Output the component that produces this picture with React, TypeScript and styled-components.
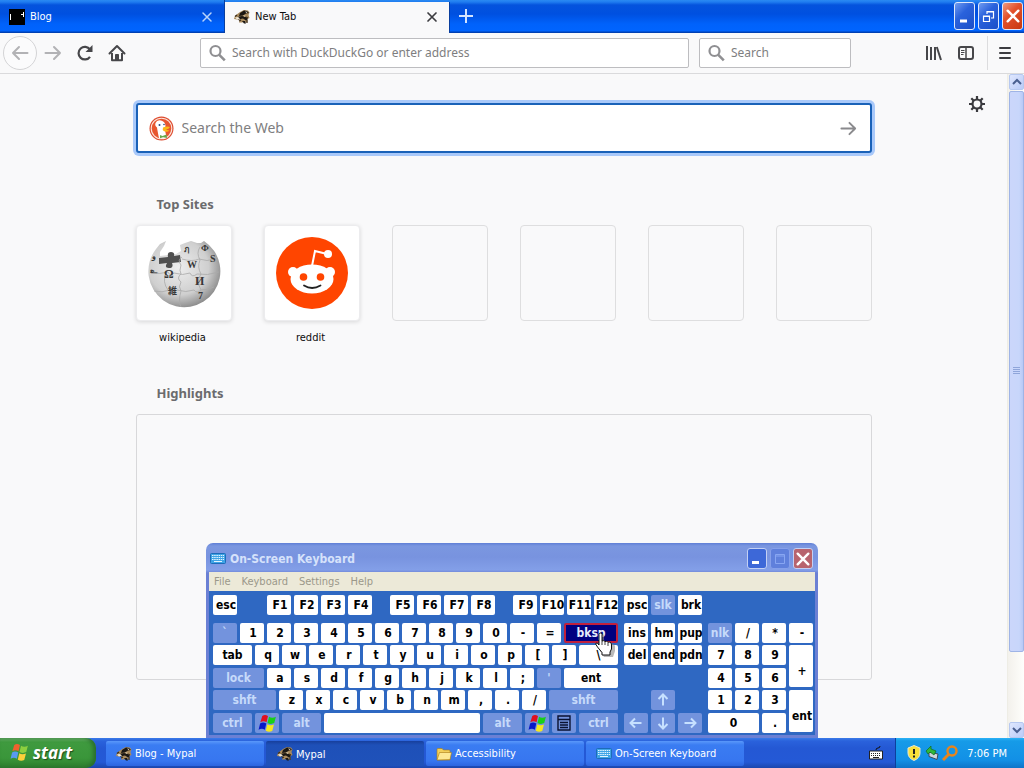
import React from "react";
import styled, { createGlobalStyle, css } from "styled-components";

const ui = `"DejaVu Sans Condensed", "DejaVu Sans", "Noto Sans CJK JP", sans-serif`;
const humanist = `"Noto Sans", "Open Sans", sans-serif`;

const GlobalStyle = createGlobalStyle`
  * { box-sizing: border-box; }
  body { margin: 0; font-family: ${ui}; font-size: 11px; color: #0c0c0d; }
  button, input { font: inherit; color: inherit; }
  button { padding: 0; border: 0; background: none; }
  svg { display: block; flex: none; }
  h2 { margin: 0; }
`;

const Screen = styled.div`
  min-height: 100vh;
  display: flex;
  flex-direction: column;
  background: #f9f9fa;
  overflow: hidden;
`;

/* ---------- tab strip ---------- */

const TabStrip = styled.header`
  display: flex;
  height: 33px;
  background: linear-gradient(#2a8af2 0, #1f7cf0 2px, #0453dd 5px, #0050e0 14px, #0062fb 24px, #0064ff 31px, #0040b4 32px);
`;

const Tab = styled.div<{ $active?: boolean }>`
  flex: 0 1 225px;
  display: flex;
  align-items: center;
  padding: 0 11px 0 9px;
  gap: 5px;
  color: #fff;
  border-right: 1px solid #0a3f9f;
  ${(p) =>
    p.$active &&
    css`
      margin-top: 2px;
      padding-bottom: 2px;
      background: #f9f9fa;
      color: #0c0c0d;
    `}
`;

const TabTitle = styled.span`
  flex: 1;
  line-height: 16px;
`;

const TabClose = styled.button`
  width: 12px;
  height: 12px;
`;

const NewTab = styled.button`
  width: 32px;
  display: flex;
  align-items: center;
  justify-content: center;
  padding-bottom: 2px;
`;

const WindowButtons = styled.div`
  margin-left: auto;
  display: flex;
  gap: 3px;
  padding: 2px 1px 3px 0;
`;

const WindowButton = styled.button<{ $close?: boolean }>`
  width: 21px;
  height: 28px;
  display: flex;
  align-items: center;
  justify-content: center;
  border: 1px solid #dfe9fb;
  border-radius: 3px;
  background: ${(p) =>
    p.$close
      ? "linear-gradient(135deg, #ee9a80, #e2512b 40%, #c8380f)"
      : "linear-gradient(135deg, #6f9bf0, #2a62dc 40%, #1b4fc8)"};
`;

/* ---------- navigation bar ---------- */

const NavBar = styled.nav`
  display: flex;
  align-items: center;
  height: 41px;
  padding: 0 3px;
  border-bottom: 1px solid #dadadc;
  background: #f9f9fa;
`;

const NavButton = styled.button<{ $round?: boolean }>`
  flex: none;
  width: 32px;
  height: 32px;
  display: flex;
  align-items: center;
  justify-content: center;
  ${(p) =>
    p.$round &&
    css`
      width: 34px;
      height: 34px;
      border: 1px solid #d4d4d6;
      border-radius: 50%;
      background: #fbfbfc;
    `}
`;

const Spring = styled.div`
  flex: 1 1 67px;
`;

const Field = styled.label<{ $basis: number }>`
  flex: 1 1 ${(p) => p.$basis}px;
  min-width: 0;
  display: flex;
  align-items: center;
  gap: 6px;
  height: 30px;
  padding: 0 8px;
  border: 1px solid #bdbdc0;
  border-radius: 2px;
  background: #fff;
  & + & { margin-left: 10px; }
`;

const FieldInput = styled.input<{ $large?: boolean }>`
  flex: 1;
  min-width: 0;
  width: 100%;
  padding: 0;
  border: 0;
  outline: 0;
  background: transparent;
  font-family: ${humanist};
  font-size: ${(p) => (p.$large ? 14 : 12)}px;
  line-height: 20px;
  &::placeholder { color: #7e7e80; opacity: 1; }
`;

const Divider = styled.div`
  width: 1px;
  height: 34px;
  margin: 0 1px 0 5px;
  background: #dcdcde;
`;

/* ---------- new tab page ---------- */

const Viewport = styled.main`
  position: relative;
  flex: 1;
  display: flex;
`;

const NewTabPage = styled.div`
  position: relative;
  flex: 1;
  padding: 29px 16px 58px;
`;

const Settings = styled.button`
  position: absolute;
  top: 21px;
  right: 21px;
  width: 18px;
  height: 18px;
`;

const Column = styled.div`
  max-width: 736px;
  margin: 0 auto;
`;

const SearchBox = styled.form`
  display: flex;
  align-items: center;
  gap: 8px;
  height: 50px;
  padding: 0 12px 0 11px;
  border: 2px solid #1a62b8;
  border-radius: 3px;
  background: #fff;
  box-shadow: 0 0 0 3px #a9c9fa;
`;

const SectionTitle = styled.h2`
  padding-left: 21px;
  margin: 43px 0 13px;
  font: bold 13px/16px ${humanist};
  color: #6b6b6d;
`;

const Sites = styled.ul`
  display: grid;
  grid-template-columns: repeat(6, 96px);
  justify-content: space-between;
  margin: 0;
  padding: 0;
  list-style: none;
`;

const SiteLink = styled.a`
  display: block;
  color: inherit;
  text-decoration: none;
`;

const Tile = styled.div<{ $filled?: boolean }>`
  height: 96px;
  display: flex;
  align-items: center;
  justify-content: center;
  border: 1px solid ${(p) => (p.$filled ? "#ececee" : "#dededf")};
  border-radius: 4px;
  background: ${(p) => (p.$filled ? "#fff" : "transparent")};
  box-shadow: ${(p) => (p.$filled ? "0 1px 4px rgba(12, 12, 13, 0.14)" : "none")};
`;

const SiteName = styled.div`
  height: 16px;
  margin-top: 9px;
  padding-right: 2px;
  line-height: 16px;
  text-align: center;
`;

const Highlights = styled.section`
  ${SectionTitle} { margin-top: 39px; }
`;

const HighlightsBox = styled.div`
  height: 266px;
  border: 1px solid #d8d8da;
  border-radius: 3px;
`;

/* ---------- scrollbar ---------- */

const ScrollBar = styled.div`
  flex: none;
  width: 17px;
  display: flex;
  flex-direction: column;
  padding-left: 1px;
  border-left: 1px solid #eeede5;
  background: linear-gradient(90deg, #f3f1ec, #fefefb);
`;

const ScrollArrow = styled.button`
  height: 16px;
  display: flex;
  align-items: center;
  justify-content: center;
  border: 1px solid #b6c8f0;
  border-radius: 2px;
  background: linear-gradient(135deg, #dfe7fe, #bacbf8);
`;

const ScrollTrack = styled.div`
  flex: 1;
  padding: 1px 0;
`;

const ScrollThumb = styled.div`
  height: 89%;
  display: flex;
  align-items: center;
  justify-content: center;
  border: 1px solid #9fb4e6;
  border-radius: 2px;
  background: linear-gradient(90deg, #cbd6fb, #c8d6fb 70%, #b8c9f6);
`;

/* ---------- on-screen keyboard ---------- */

const KeyboardWindow = styled.section`
  position: absolute;
  left: 50%;
  bottom: 0;
  transform: translateX(-50%);
  width: 612px;
  padding: 0 3px 3px;
  border-radius: 7px 7px 0 0;
  background: linear-gradient(#5f7fd6 0, #7b97e0 3px, #7893df 14px, #839fe8 27px, #6b80d4 30px);
`;

const TitleBar = styled.div`
  display: flex;
  align-items: center;
  height: 29px;
  gap: 4px;
  padding: 2px 2px 0 1px;
`;

const Title = styled.h2`
  flex: 1;
  font: bold 12px/18px ${ui};
  color: #d6e2fb;
`;

const TitleButton = styled.button<{ $kind: "min" | "max" | "close" }>`
  width: 20px;
  height: 21px;
  margin-left: -1px;
  display: flex;
  align-items: center;
  justify-content: center;
  border: 1px solid ${(p) => (p.$kind === "max" ? "#86a0ea" : "#c3d0f4")};
  border-radius: 3px;
  background: ${(p) => ({ min: "#3d68d8", max: "#5f80dc", close: "#b8646e" })[p.$kind]};
`;

const MenuBar = styled.div`
  display: flex;
  gap: 11px;
  height: 19px;
  padding: 0 5px;
  background: #ece9d8;
`;

const MenuItem = styled.button`
  line-height: 18px;
  color: #9b988a;
`;

const Keys = styled.div`
  display: flex;
  gap: 6px;
  padding: 4px 2px 2px 4px;
  background: #2f68c2;
`;

const KeyRows = styled.div`
  display: grid;
  grid-template-rows: 28px 22px 23px 22px 23px 20px;
`;

const KeyRow = styled.div`
  display: flex;
  gap: 3px;
`;

const PadGrid = styled(KeyRows)<{ $cols: number }>`
  grid-template-columns: repeat(${(p) => p.$cols}, 24px);
  column-gap: 3px;
`;

const Key = styled.button<{ $w?: number; $dim?: boolean; $tall?: boolean; $hot?: boolean; $at?: string }>`
  flex: none;
  position: relative;
  width: ${(p) => p.$w ?? 24}px;
  height: ${(p) => (p.$tall ? 42 : 20)}px;
  grid-area: ${(p) => p.$at ?? "auto"};
  display: flex;
  align-items: center;
  justify-content: center;
  padding-top: ${(p) => (p.$tall ? 10 : 0)}px;
  padding-left: ${(p) => (p.$w || p.$dim ? 0 : 2)}px;
  border-radius: 2px;
  font-size: 12px;
  font-weight: bold;
  line-height: 22px;
  background: ${(p) => (p.$dim ? "#7393dd" : "#fff")};
  color: ${(p) => (p.$dim ? "#c6dafa" : "#000")};
  ${(p) =>
    p.$hot &&
    css`
      border: 2px solid #c0203c;
      background: #000080;
      color: #e6ecfc;
    `}
`;

const KeyGap = styled.div<{ $w: number }>`
  width: ${(p) => p.$w}px;
`;

const Pointer = styled.svg`
  position: absolute;
  left: 29px;
  top: 7px;
  z-index: 2;
`;

/* ---------- task bar ---------- */

const TaskBar = styled.footer`
  display: flex;
  height: 30px;
  background: linear-gradient(#3a7be8 0, #2a62dc 3px, #2458d4 10px, #2459d6 24px, #1b46ac 30px);
`;

const StartButton = styled.button`
  display: flex;
  align-items: center;
  gap: 4px;
  width: 96px;
  margin-right: 10px;
  padding: 0 0 1px 10px;
  border-radius: 0 10px 10px 0;
  background: linear-gradient(#6fb76f 0, #3f9a3f 4px, #3a963a 20px, #2c7c2c 30px);
  box-shadow: inset -3px 0 4px #2a6e2e;
  font: italic bold 17px/20px "Open Sans", sans-serif;
  color: #fff;
  text-shadow: 1px 1px 1px #1d4d1d;
`;

const Tasks = styled.div`
  flex: 1;
  display: flex;
  gap: 2px;
  padding: 3px 0 2px;
`;

const Task = styled.button<{ $active?: boolean }>`
  flex: 0 1 158px;
  display: flex;
  align-items: center;
  gap: 3px;
  padding: ${(p) => (p.$active ? "1px 10px 0 11px" : "0 10px")};
  border-radius: 2px;
  color: #fff;
  background: ${(p) =>
    p.$active ? "linear-gradient(#173f9c, #1e50b8 4px, #1f52ba)" : "linear-gradient(#5a98fa, #3a7cf2 4px, #3776f0 20px, #2c65e0)"};
`;

const LanguageBar = styled.button`
  width: 38px;
  display: flex;
  align-items: center;
  justify-content: center;
`;

const Tray = styled.div`
  display: flex;
  align-items: center;
  gap: 2px;
  padding: 0 17px 0 10px;
  border-left: 1px solid #0d3f9c;
  background: linear-gradient(#2bb2f6 0, #169be8 3px, #1290e6 22px, #0e74c8 30px);
  color: #fff;
`;

const Clock = styled.time`
  margin-left: 7px;
`;

/* ---------- drawings ---------- */

const Cross = ({ size, color, width = 1.5 }: { size: number; color: string; width?: number }) => (
  <svg width={size} height={size} viewBox="0 0 12 12" stroke={color} strokeWidth={width} strokeLinecap="round">
    <path d="M2 2 10 10M10 2 2 10" />
  </svg>
);

const Arrow = ({ color, flip, size = 20 }: { color: string; flip?: boolean; size?: number }) => (
  <svg width={size} height={size} viewBox="0 0 20 20" fill="none" stroke={color} strokeWidth="2" strokeLinecap="round" strokeLinejoin="round">
    <path d={flip ? "M17.5 10H3M9 4 3 10l6 6" : "M2.5 10H17M11 4l6 6-6 6"} />
  </svg>
);

const Magnifier = () => (
  <svg width="17" height="18" viewBox="0 0 17 18" fill="none" stroke="#8f8f92">
    <circle cx="6.5" cy="7" r="5" strokeWidth="2.2" />
    <path d="M10.3 10.8 15.8 16.3" strokeWidth="2.6" />
  </svg>
);

const Raccoon = () => (
  <svg width="16" height="16" viewBox="0 0 16 16">
    <path d="M2 6 6 3l4-2 4 .5 1.500 2-1 2.500 1 3-2 1v3.500h-2l-1-2-2 2H5l1-3H3L0 10l1-3z" fill="#a98a5c" />
    <path d="M6 4l4-2.500 3 .5 2 2-3 .5-3 2-4 .5zM3 8l5-1 4 1 2 2-2 1.500-3-2-5 1zM8 12h3l1 2.500h-2z" fill="#1b1713" />
    <path d="M1 8.500 4 8l2 1.500-3 1zM11 2.500l2.500.5-1 1zM9 6.500l2.500.3-1 1z" fill="#f4ead6" />
    <path d="M1 7.500 3 6M12 8l2 1M5 12l2-1M13 11v3" stroke="#3b2d1c" strokeWidth="1.200" />
  </svg>
);

const WinFlag = ({ size, soft }: { size: number; soft?: boolean }) => (
  <svg width={size} height={size} viewBox="0 0 20 20">
    <path d="M4.500 2.200Q7-.2 10.500 2L9 8.600Q5.600 6.600 2.500 8.600z" fill={soft ? "#f0612e" : "#e01020"} />
    <path d="M11.600 3Q15 5 18.800 3l-1.700 6.600Q13.500 11.400 10 9.400z" fill={soft ? "#8ccf3f" : "#18d018"} />
    <path d="M2.200 9.900Q5.400 8 8.700 10L7.200 16.500Q4 14.500.6 16.500z" fill={soft ? "#5a9af0" : "#0818c8"} />
    <path d="M9.800 10.900Q13 12.700 16.800 11L15 17.800Q11.500 19.600 8.200 17.500z" fill={soft ? "#fcd03a" : "#f4e820"} />
  </svg>
);

const KeyboardIcon = () => (
  <svg width="16" height="16" viewBox="0 0 16 16">
    <rect x="0.500" y="2.500" width="15" height="10" rx="1" fill="#3fa4e6" stroke="#1d6cb8" />
    <path d="M2 4.500h12M2 6.500h12M2 8.500h12" stroke="#e2f4ff" strokeDasharray="1.500 .7" />
    <path d="M4 10.500h8" stroke="#e2f4ff" />
  </svg>
);

const Folder = () => (
  <svg width="16" height="16" viewBox="0 0 16 16" stroke="#a87a12" strokeWidth=".6">
    <path d="M1 3.500Q1 2.500 2 2.500h4l1.500 1.500H13q1 0 1 1V14H1z" fill="#f2cf5a" />
    <path d="M1 14 3.500 6.500h12L14 13.500z" fill="#fde894" />
  </svg>
);

const DuckLogo = () => (
  <svg width="25" height="25" viewBox="0 0 25 25">
    <circle cx="12.500" cy="12.500" r="12" fill="#dd4b2e" />
    <circle cx="12.500" cy="12.500" r="10.300" fill="#e8562f" stroke="#fbe4dc" strokeWidth="1.100" />
    <path d="M6.500 7Q8 3.500 12 4.500q4 1 4.500 5L16 14l1.500 7.500q-4 2-7.500.8Q8.500 15 8 11.500 5.500 9.500 6.500 7z" fill="#fff" />
    <path d="M14 11.500q4-1.500 7-.5-1 2-4 2.500 2 1 3.500 1-2 2-5.500.8-2-1.300-1-3.800z" fill="#fbb917" />
    <path d="M11 19l2.500 1 4-1.500.5 3.500-4-.8-3 1z" fill="#67a94a" />
    <circle cx="10.500" cy="9" r="1" fill="#2b4a7d" />
    <circle cx="15" cy="8.500" r=".8" fill="#2b4a7d" />
  </svg>
);

const Gear = () => (
  <svg width="18" height="18" viewBox="0 0 18 18" fill="none" stroke="#3a3a3e">
    <circle cx="9" cy="9" r="4.500" strokeWidth="2.200" />
    <path
      d="M9 1v3M9 14v3M1 9h3M14 9h3M3.300 3.300l2.200 2.200M12.500 12.500l2.200 2.200M3.300 14.700l2.200-2.200M12.500 5.500l2.200-2.200"
      strokeWidth="2.200"
    />
  </svg>
);

const WikipediaGlobe = () => (
  <svg width="76" height="76" viewBox="0 0 76 76">
    <defs>
      <radialGradient id="globe" cx=".42" cy=".4" r=".64">
        <stop offset="0" stopColor="#ededed" />
        <stop offset=".65" stopColor="#cfcfcf" />
        <stop offset="1" stopColor="#858585" />
      </radialGradient>
    </defs>
    <path
      d="M20 6l-2 5-4 6 0 4 16-2 5-3-1-6 5-2 6-2 6 2 4 0 3-2A36 36 0 1 1 10 14l4-5z"
      fill="url(#globe)"
    />
    <path d="M13 23l9-1q-1-5 3-5t3 4l6-1 1 7-9 1q2 5-3 5t-2-5l-8 1z" fill="#505050" />
    <g fill="none" stroke="#a9a9a9" strokeWidth=".8">
      <path d="M4 37q10 3 18 0 2 5 6 1 9 3 16 0 2 5 7 1 10 2 22-2" />
      <path d="M8 56q8 2 16-1 3 5 7 0 9 3 17 0 3 4 7 0 6 0 13-3" />
      <path d="M20 38q-4 9 2 17M36 22q-5 3-1 8-2 6 0 9-5 4 0 8-3 5 0 9-3 10 0 16M54 12q-4 6 0 13-3 7 1 14-5 7 0 16" />
      <path d="M36 24q10 3 17 0 8 3 16 0" />
    </g>
    <g fill="#383838" fontFamily="Liberation Serif, Noto Sans CJK JP, serif" fontWeight="bold">
      <text x="18" y="43" fontSize="12">Ω</text>
      <text x="41" y="33" fontSize="10">W</text>
      <text x="49" y="50" fontSize="12">И</text>
      <text x="22" y="59" fontSize="9">維</text>
      <text x="52" y="64" fontSize="10">7</text>
      <text x="38" y="17" fontSize="8">ฦ</text>
      <text x="55" y="16" fontSize="9">Ф</text>
      <text x="64" y="27" fontSize="10">S</text>
      <text x="4" y="38" fontSize="8">உ</text>
      <text x="6" y="24" fontSize="8">و</text>
    </g>
  </svg>
);

const RedditLogo = () => (
  <svg width="72" height="72" viewBox="0 0 72 72">
    <circle cx="36" cy="36" r="36" fill="#ff4500" />
    <path d="M36 29 39 14l12 3" fill="none" stroke="#fff" strokeWidth="2" />
    <circle cx="52" cy="17" r="4" fill="#fff" />
    <circle cx="17" cy="35" r="5" fill="#fff" />
    <circle cx="54" cy="35" r="5" fill="#fff" />
    <ellipse cx="36" cy="42" rx="21.500" ry="14.500" fill="#fff" />
    <circle cx="27.500" cy="40" r="3.800" fill="#ff4500" />
    <circle cx="44.500" cy="40" r="3.800" fill="#ff4500" />
    <path d="M28 48.500q8 5 16.500 0" fill="none" stroke="#222" strokeWidth="1.800" strokeLinecap="round" />
  </svg>
);

const Chevron = ({ down }: { down?: boolean }) => (
  <svg width="10" height="8" viewBox="0 0 10 8" fill="none" stroke="#4a5f90" strokeWidth="2">
    <path d={down ? "M1 2l4 4 4-4" : "M1 6l4-4 4 4"} />
  </svg>
);

const KeyArrow = ({ turn }: { turn: number }) => (
  <svg width="14" height="14" viewBox="0 0 14 14" fill="none" stroke="#c6e0ff" strokeWidth="2">
    <path d="M1.500 7h11M8 2.500l4.500 4.500L8 11.500" transform={`rotate(${turn} 7 7)`} />
  </svg>
);

const MenuKeyIcon = () => (
  <svg width="14" height="16" viewBox="0 0 14 16" fill="none" stroke="#0a1230" strokeWidth="1.400">
    <path d="M1 1h12v14H1zM1 4.500h12M3 7.500h8M3 10h8M3 12.500h8" />
  </svg>
);

const HandPointer = () => (
  <Pointer width="20" height="26" viewBox="0 0 20 26" aria-hidden="true">
    <path d="M6 3.500Q6 2 7.500 2T9 3.500V10l9 2q2 .5 2 2.500V19l-2 6H9l-5-8-1-3 2-.5 2 2z" fill="#8a8a8a" opacity=".6" />
    <path
      d="M4 2.500Q4 1 5.500 1T7 2.500V9q2-1 3 .5 2-.8 3 .8 2-.6 3 .7.500.5.500 2V17l-1.500 3v3H7v-2.500L2.500 15 .6 12q0-1.500 1.900-.7L4 13z"
      fill="#fff"
      stroke="#111"
      strokeWidth="1"
    />
    <path d="M7 9v4M10 10v3M13 11v3" stroke="#111" strokeWidth=".8" />
  </Pointer>
);

/* ---------- keyboard data ---------- */

type KeySpec = { label?: string; w?: number; dim?: boolean; hot?: boolean; gap?: boolean; icon?: "win" | "menu"; name?: string };

const plain = (labels: string): KeySpec[] => labels.split(" ").map((label) => ({ label }));

const mainRows: KeySpec[][] = [
  [
    { label: "esc" }, { gap: true, w: 24 }, ...plain("F1 F2 F3 F4"), { gap: true, w: 12 },
    ...plain("F5 F6 F7 F8"), { gap: true, w: 12 }, ...plain("F9 F10 F11 F12"),
  ],
  [{ label: "`", dim: true }, ...plain("1 2 3 4 5 6 7 8 9 0 - ="), { label: "bksp", w: 54, hot: true }],
  [{ label: "tab", w: 39 }, ...plain("q w e r t y u i o p [ ]"), { label: "\\", w: 39 }],
  [{ label: "lock", w: 51, dim: true }, ...plain("a s d f g h j k l ;"), { label: "'", dim: true }, { label: "ent", w: 54 }],
  [{ label: "shft", w: 63, dim: true }, ...plain("z x c v b n m , . /"), { label: "shft", w: 69, dim: true }],
  [
    { label: "ctrl", w: 39, dim: true }, { icon: "win", dim: true, name: "Windows" }, { label: "alt", w: 39, dim: true },
    { w: 156, name: "Space" }, { label: "alt", w: 39, dim: true }, { icon: "win", dim: true, name: "Windows" },
    { icon: "menu", dim: true, name: "Menu" }, { label: "ctrl", w: 39, dim: true },
  ],
];

type PadKey = { label?: string; at: string; dim?: boolean; w?: number; tall?: boolean; turn?: number; name?: string };

const editPad: PadKey[] = [
  { label: "psc", at: "1 / 1" }, { label: "slk", at: "1 / 2", dim: true }, { label: "brk", at: "1 / 3" },
  { label: "ins", at: "2 / 1" }, { label: "hm", at: "2 / 2" }, { label: "pup", at: "2 / 3" },
  { label: "del", at: "3 / 1" }, { label: "end", at: "3 / 2" }, { label: "pdn", at: "3 / 3" },
  { at: "5 / 2", dim: true, turn: -90, name: "Up" }, { at: "6 / 1", dim: true, turn: 180, name: "Left" },
  { at: "6 / 2", dim: true, turn: 90, name: "Down" }, { at: "6 / 3", dim: true, turn: 0, name: "Right" },
];

const numberPad: PadKey[] = [
  { label: "nlk", at: "2 / 1", dim: true }, { label: "/", at: "2 / 2" }, { label: "*", at: "2 / 3" }, { label: "-", at: "2 / 4" },
  { label: "7", at: "3 / 1" }, { label: "8", at: "3 / 2" }, { label: "9", at: "3 / 3" },
  { label: "+", at: "3 / 4 / span 2", tall: true },
  { label: "4", at: "4 / 1" }, { label: "5", at: "4 / 2" }, { label: "6", at: "4 / 3" },
  { label: "1", at: "5 / 1" }, { label: "2", at: "5 / 2" }, { label: "3", at: "5 / 3" },
  { label: "ent", at: "5 / 4 / span 2", tall: true },
  { label: "0", at: "6 / 1 / auto / span 2", w: 51 }, { label: ".", at: "6 / 3" },
];

const Pad = ({ keys, cols }: { keys: PadKey[]; cols: number }) => (
  <PadGrid $cols={cols}>
    {keys.map((k) => (
      <Key key={k.at} $at={k.at} $dim={k.dim} $w={k.w} $tall={k.tall} aria-label={k.name}>
        {k.turn === undefined ? k.label : <KeyArrow turn={k.turn} />}
      </Key>
    ))}
  </PadGrid>
);

const OnScreenKeyboard = () => (
  <KeyboardWindow aria-label="On-Screen Keyboard">
    <TitleBar>
      <KeyboardIcon />
      <Title>On-Screen Keyboard</Title>
      <TitleButton $kind="min" aria-label="Minimize">
        <svg width="12" height="12" viewBox="0 0 12 12"><path d="M1 9.500h7" stroke="#fff" strokeWidth="3" /></svg>
      </TitleButton>
      <TitleButton $kind="max" aria-label="Maximize">
        <svg width="12" height="12" viewBox="0 0 12 12" fill="none" stroke="#88a6f2"><path d="M1.500 1.500h9v9h-9zM1.500 3h9" /></svg>
      </TitleButton>
      <TitleButton $kind="close" aria-label="Close">
        <Cross size={16} color="#fff" width={1.800} />
      </TitleButton>
    </TitleBar>
    <MenuBar>
      {["File", "Keyboard", "Settings", "Help"].map((m) => (
        <MenuItem key={m}>{m}</MenuItem>
      ))}
    </MenuBar>
    <Keys>
      <KeyRows>
        {mainRows.map((row, r) => (
          <KeyRow key={r}>
            {row.map((k, i) =>
              k.gap ? (
                <KeyGap key={i} $w={k.w ?? 12} />
              ) : (
                <Key key={i} $w={k.w} $dim={k.dim} $hot={k.hot} aria-label={k.name}>
                  {k.label}
                  {k.icon === "win" && <WinFlag size={19} />}
                  {k.icon === "menu" && <MenuKeyIcon />}
                  {k.hot && <HandPointer />}
                </Key>
              )
            )}
          </KeyRow>
        ))}
      </KeyRows>
      <Pad keys={editPad} cols={3} />
      <Pad keys={numberPad} cols={4} />
    </Keys>
  </KeyboardWindow>
);

export default function App() {
  return (
    <Screen>
      <GlobalStyle />
      <TabStrip>
        <Tab>
          <svg width="16" height="16" viewBox="0 0 16 16">
            <path d="M0 0h16v16H0z" fill="#000" />
            <path d="M1 5h1v6H1zM14 3h1v5h-1zM12 5h2v1h-2z" fill="#fff" />
          </svg>
          <TabTitle>Blog</TabTitle>
          <TabClose aria-label="Close Blog"><Cross size={12} color="#b9d4fb" width={1.500} /></TabClose>
        </Tab>
        <Tab $active>
          <Raccoon />
          <TabTitle>New Tab</TabTitle>
          <TabClose aria-label="Close New Tab"><Cross size={12} color="#3c3c40" width={1.700} /></TabClose>
        </Tab>
        <NewTab aria-label="New tab">
          <svg width="14" height="14" viewBox="0 0 14 14" stroke="#d3e4ff" strokeWidth="2"><path d="M7 0v14M0 7h14" /></svg>
        </NewTab>
        <WindowButtons>
          <WindowButton aria-label="Minimize">
            <svg width="13" height="13" viewBox="0 0 13 13"><path d="M2 11h7" stroke="#fff" strokeWidth="3" /></svg>
          </WindowButton>
          <WindowButton aria-label="Restore">
            <svg width="13" height="13" viewBox="0 0 13 13" fill="none" stroke="#fff" strokeWidth="1.200">
              <path d="M1.500 6h6v5.500h-6zM1.500 6.500h6M5 4V1.500h6.500V8H9M5 2h6.500" />
            </svg>
          </WindowButton>
          <WindowButton $close aria-label="Close">
            <Cross size={16} color="#fff" width={1.800} />
          </WindowButton>
        </WindowButtons>
      </TabStrip>

      <NavBar>
        <NavButton $round aria-label="Back"><Arrow flip color="#b2b2b5" /></NavButton>
        <NavButton aria-label="Forward"><Arrow color="#b2b2b5" /></NavButton>
        <NavButton aria-label="Reload">
          <svg width="18" height="18" viewBox="0 0 18 18" fill="none" stroke="#47474a" strokeWidth="2.200">
            <path d="M14 12.800A6.300 6.300 0 1 1 14 5.500" />
            <path d="M16.500 1v7h-7z" fill="#47474a" stroke="none" />
          </svg>
        </NavButton>
        <NavButton aria-label="Home">
          <svg width="18" height="18" viewBox="0 0 18 18" fill="none" stroke="#47474a" strokeWidth="2" strokeLinejoin="round">
            <path d="M1.500 9.500 9 2l7.500 7.500" strokeLinecap="round" />
            <path d="M4 9v7.300h10V9" />
            <path d="M7.500 10.500h3v5.500h-3z" fill="#47474a" strokeWidth="1" />
          </svg>
        </NavButton>
        <Spring />
        <Field $basis={489}>
          <Magnifier />
          <FieldInput aria-label="Address" placeholder="Search with DuckDuckGo or enter address" />
        </Field>
        <Field $basis={152}>
          <Magnifier />
          <FieldInput aria-label="Search" placeholder="Search" />
        </Field>
        <Spring />
        <NavButton aria-label="Library">
          <svg width="16" height="16" viewBox="0 0 16 16" stroke="#47474a" strokeWidth="2">
            <path d="M1 1v14M5 2v13M9 2v13M10.800 2l4.200 13" />
          </svg>
        </NavButton>
        <NavButton aria-label="Sidebars">
          <svg width="16" height="16" viewBox="0 0 16 16" fill="none" stroke="#47474a">
            <rect x="1" y="2" width="14" height="12" rx="2" strokeWidth="2" />
            <path d="M8 2v12" strokeWidth="1.500" />
            <path d="M3 5.500h3.500M3 7.500h3.500M3 9.500h2.500" />
          </svg>
        </NavButton>
        <Divider />
        <NavButton aria-label="Menu">
          <svg width="12" height="14" viewBox="0 0 12 14" stroke="#3c3c40" strokeWidth="2" strokeLinecap="round">
            <path d="M1 2h10M1 7h10M1 12h10" />
          </svg>
        </NavButton>
      </NavBar>

      <Viewport>
        <NewTabPage>
          <Settings aria-label="Customize"><Gear /></Settings>
          <Column>
            <SearchBox role="search">
              <DuckLogo />
              <FieldInput $large aria-label="Search the Web" placeholder="Search the Web" />
              <Arrow color="#8a8a8d" size={19} />
            </SearchBox>
            <section>
              <SectionTitle>Top Sites</SectionTitle>
              <Sites>
                <li>
                  <SiteLink href="#wikipedia"><Tile $filled><WikipediaGlobe /></Tile><SiteName>wikipedia</SiteName></SiteLink>
                </li>
                <li>
                  <SiteLink href="#reddit"><Tile $filled><RedditLogo /></Tile><SiteName>reddit</SiteName></SiteLink>
                </li>
                {[2, 3, 4, 5].map((n) => (
                  <li key={n}><Tile /></li>
                ))}
              </Sites>
            </section>
            <Highlights>
              <SectionTitle>Highlights</SectionTitle>
              <HighlightsBox />
            </Highlights>
          </Column>
        </NewTabPage>
        <ScrollBar>
          <ScrollArrow aria-label="Scroll up"><Chevron /></ScrollArrow>
          <ScrollTrack>
            <ScrollThumb>
              <svg width="7" height="8" viewBox="0 0 7 8"><path d="M0 .5h7M0 2.500h7M0 4.500h7M0 6.500h7" stroke="#8fa5da" /></svg>
            </ScrollThumb>
          </ScrollTrack>
          <ScrollArrow aria-label="Scroll down"><Chevron down /></ScrollArrow>
        </ScrollBar>
        <OnScreenKeyboard />
      </Viewport>

      <TaskBar>
        <StartButton><WinFlag size={19} soft />start</StartButton>
        <Tasks>
          <Task><Raccoon />Blog - Mypal</Task>
          <Task $active><Raccoon />Mypal</Task>
          <Task><Folder />Accessibility</Task>
          <Task><KeyboardIcon />On-Screen Keyboard</Task>
        </Tasks>
        <LanguageBar aria-label="Input language">
          <svg width="14" height="14" viewBox="0 0 14 14">
            <path d="M7 4Q7 2 9 2t2-2" fill="none" stroke="#111" />
            <path d="M.5 5h13v8H.5z" fill="#fff" stroke="#222" />
            <path d="M2 7.500h10M2 9.500h10" stroke="#222" strokeDasharray="1 1" />
            <path d="M4 11.500h6" stroke="#222" />
          </svg>
        </LanguageBar>
        <Tray>
          <svg width="16" height="16" viewBox="0 0 16 16">
            <path d="M8 .5 14 3v5q0 5-6 7.500Q2 13 2 8V3z" fill="#f8e03a" stroke="#e8e8d0" />
            <path d="M8 4v5M8 10.500v2" stroke="#222" strokeWidth="2" />
          </svg>
          <svg width="16" height="16" viewBox="0 0 16 16">
            <path d="M5 7l9 2-1 5.500-8-3z" fill="#cfd6dc" stroke="#3c4a58" />
            <path d="M2 6 7 1v3l5 2-2 4-4-3-2 2z" fill="#2fb83a" stroke="#136b1c" strokeWidth=".7" />
          </svg>
          <svg width="16" height="16" viewBox="0 0 16 16" fill="none" stroke="#e8851c">
            <circle cx="10" cy="6" r="4.500" strokeWidth="2.400" />
            <path d="M6.500 9.500 1 15" strokeWidth="3" />
          </svg>
          <Clock>7:06 PM</Clock>
        </Tray>
      </TaskBar>
    </Screen>
  );
}
